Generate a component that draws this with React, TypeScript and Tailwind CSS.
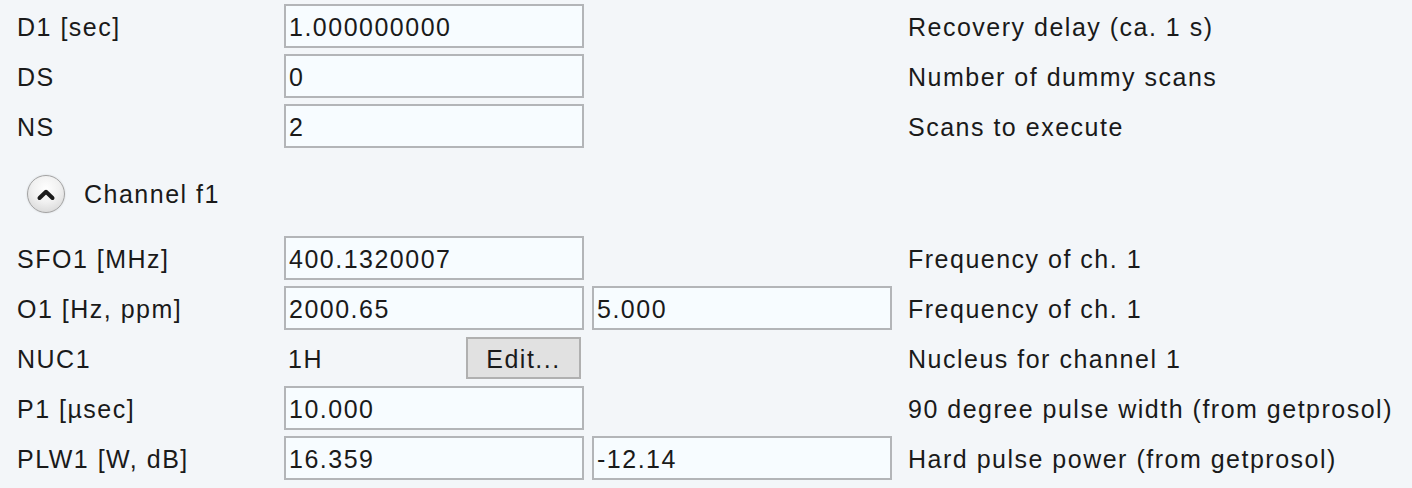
import React from "react";

type Row = {
    label: string;
    value?: string;
    value2?: string;
    nucleus?: string;
    desc: string;
};

const topRows: Row[] = [
    { label: "D1 [sec]", value: "1.000000000", desc: "Recovery delay (ca. 1 s)" },
    { label: "DS", value: "0", desc: "Number of dummy scans" },
    { label: "NS", value: "2", desc: "Scans to execute" },
];

const channelRows: Row[] = [
    { label: "SFO1 [MHz]", value: "400.1320007", desc: "Frequency of ch. 1" },
    { label: "O1 [Hz, ppm]", value: "2000.65", value2: "5.000", desc: "Frequency of ch. 1" },
    { label: "NUC1", nucleus: "1H", desc: "Nucleus for channel 1" },
    { label: "P1 [µsec]", value: "10.000", desc: "90 degree pulse width (from getprosol)" },
    { label: "PLW1 [W, dB]", value: "16.359", value2: "-12.14", desc: "Hard pulse power (from getprosol)" },
];

function Field({ value }: { value: string }) {
    return (
        <input
            readOnly
            value={value}
            className="w-[300px] h-[44px] border-2 border-[#b3b5b8] bg-[#f7fcff] px-[3px] pt-[3px] text-[25px] tracking-[1.5px] text-[#1a1a1a] outline-none"
        />
    );
}

function ParamRow({ row }: { row: Row }) {
    return (
        <div className="flex items-center h-[50px]">
            <div className="w-[284px] pl-[17px] pt-[3px]">{row.label}</div>

            {row.nucleus ? (
                <div className="w-[300px] flex items-center justify-between">
                    <span className="pl-[4px] pt-[3px]">{row.nucleus}</span>
                    <button className="w-[115px] h-[42px] mr-[3px] pt-[2px] border-2 border-[#b0b0b0] bg-[#e1e1e1] text-[25px] tracking-[1.5px] text-[#1a1a1a]">
                        Edit...
                    </button>
                </div>
            ) : (
                <Field value={row.value ?? ""} />
            )}

            {/* second value column */}
            <div className="w-[308px] pl-[8px]">
                {row.value2 && <Field value={row.value2} />}
            </div>

            <div className="pl-[16px] pt-[3px]">{row.desc}</div>
        </div>
    );
}

function CollapseIcon() {
    return (
        <div className="w-[38px] h-[38px] rounded-full border border-[#a3a3a3] bg-[radial-gradient(circle_at_50%_35%,#ffffff_0%,#f1f1f1_45%,#cfcfcf_100%)] shadow-[0_0_2px_rgba(0,0,0,0.15)] flex items-center justify-center">
            <svg width="20" height="13" viewBox="0 0 20 13">
                <polyline
                    points="3.5,10 10,3.8 16.5,10"
                    fill="none"
                    stroke="#1c1c1c"
                    strokeWidth="4"
                    strokeLinecap="round"
                    strokeLinejoin="round"
                />
            </svg>
        </div>
    );
}

export default function App() {
    return (
        <div className="w-[1412px] h-[488px] overflow-hidden bg-[#f3f6f9] pt-px text-[25px] tracking-[1.5px] text-[#1a1a1a] font-['Liberation_Sans',Arial,sans-serif]">
            {topRows.map((r) => (
                <ParamRow key={r.label} row={r} />
            ))}

            {/* Channel section header */}
            <div className="flex items-center h-[82px] pt-[4px] pl-[27px] gap-[19px]">
                <CollapseIcon />
                <span className="pt-[2px]">Channel f1</span>
            </div>

            {channelRows.map((r) => (
                <ParamRow key={r.label} row={r} />
            ))}
        </div>
    );
}
